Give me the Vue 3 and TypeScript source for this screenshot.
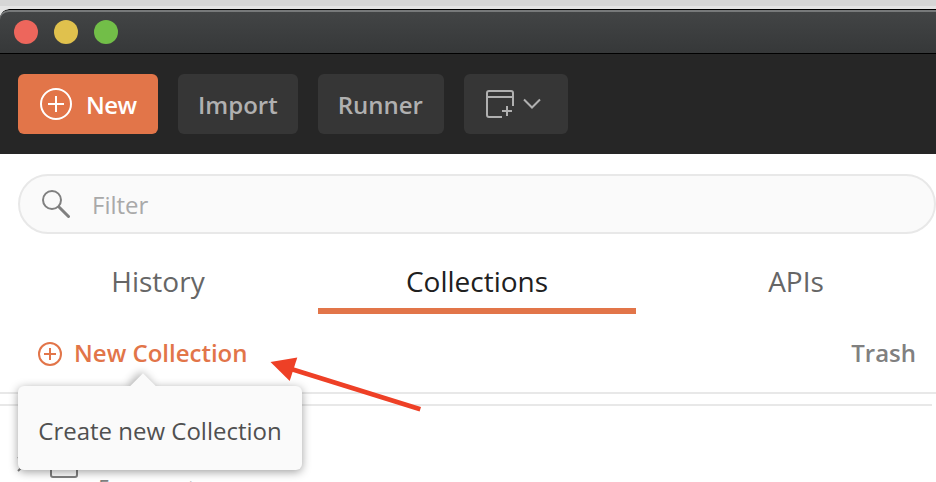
<script setup lang="ts">
import { ref } from 'vue'

interface Tab {
  id: string
  label: string
}

const tabs: Tab[] = [
  { id: 'history', label: 'History' },
  { id: 'collections', label: 'Collections' },
  { id: 'apis', label: 'APIs' },
]
const lights: string[] = ['close', 'minimize', 'maximize']
const activeTab = ref<string>('collections')
const filter = ref<string>('')
</script>

<template>
  <div class="screen">
    <div class="desktop"></div>
    <div class="window">
      <header class="titlebar">
        <span v-for="light in lights" :key="light" class="light" :class="light"></span>
      </header>

      <nav class="toolbar">
        <button class="btn primary">
          <svg width="32" height="32" viewBox="0 0 32 32" fill="none" stroke="currentColor" stroke-width="2">
            <circle cx="16" cy="16" r="15" />
            <path d="M16 8v16M8 16h16" />
          </svg>
          <span>New</span>
        </button>
        <button class="btn">Import</button>
        <button class="btn runner">Runner</button>
        <button class="btn icons" aria-label="New window">
          <svg width="28" height="28" viewBox="0 0 28 28" fill="none" stroke="currentColor" stroke-width="2">
            <path d="M16 27H3a2 2 0 0 1-2-2V3a2 2 0 0 1 2-2h22a2 2 0 0 1 2 2v13M1 7h26M21 16v10M16 21h10" />
          </svg>
          <svg width="18" height="12" viewBox="0 0 18 12" fill="none" stroke="currentColor" stroke-width="2">
            <path d="M1 1.500l8 8 8-8" />
          </svg>
        </button>
      </nav>

      <main class="sidebar">
        <label class="filter">
          <svg width="28" height="28" viewBox="0 0 28 28" fill="none" stroke="currentColor">
            <circle cx="10" cy="10" r="9" stroke-width="2" />
            <path d="M16.500 16.500l1.500 1.500" stroke-width="2" />
            <path d="M17.500 17.500l9 9" stroke-width="3" stroke-linecap="round" />
          </svg>
          <input v-model="filter" type="text" placeholder="Filter" />
        </label>

        <div class="tabs">
          <button
            v-for="tab in tabs"
            :key="tab.id"
            class="tab"
            :class="[tab.id, { active: tab.id === activeTab }]"
            @click="activeTab = tab.id"
          >
            {{ tab.label }}
          </button>
        </div>

        <div class="actions">
          <button class="new-collection">
            <svg width="24" height="24" viewBox="0 0 24 24" fill="none" stroke="currentColor" stroke-width="2">
              <circle cx="12" cy="12" r="11" />
              <path d="M12 6v12M6 12h12" />
            </svg>
            <span>New Collection</span>
          </button>
          <button class="trash">Trash</button>
          <div class="tooltip">Create new Collection</div>
        </div>

        <section class="list">
          <div class="item">
            <svg class="caret" width="10" height="16" viewBox="0 0 10 16" fill="none" stroke="currentColor" stroke-width="2">
              <path d="M1 1l7 7-7 7" />
            </svg>
            <svg class="folder" width="28" height="24" viewBox="0 0 28 24" fill="none" stroke="currentColor" stroke-width="2">
              <path d="M1 3a2 2 0 0 1 2-2h7l3 4h12a2 2 0 0 1 2 2v14a2 2 0 0 1-2 2H3a2 2 0 0 1-2-2z" />
            </svg>
            <span class="count">5 requests</span>
          </div>
        </section>
      </main>
    </div>

    <svg class="pointer" width="152" height="60" viewBox="0 0 152 60">
      <path d="M22 13.300L150.300 53.300" stroke="#ee4026" stroke-width="4.800" />
      <path d="M0.500 6L27.300 1.500L19.700 25z" fill="#ee4026" />
    </svg>
  </div>
</template>

<style>
body {
  margin: 0;
  overflow: hidden;
}
</style>

<style scoped>
.screen {
  position: relative;
  display: flex;
  flex-direction: column;
  width: 936px;
  height: 482px;
  overflow: hidden;
  background: #e4e4e4;
  font-family: "Open Sans", "Noto Sans", sans-serif;
  font-size: 24px;
}
.screen * {
  box-sizing: border-box;
}
button {
  margin: 0;
  padding: 0;
  border: 0;
  background: none;
  font: inherit;
  color: inherit;
}
.desktop {
  flex: none;
  height: 9px;
  background: linear-gradient(#d6d6d6 6px, #e4e4e4 6px);
}
.window {
  flex: 1;
  min-height: 0;
  display: flex;
  flex-direction: column;
  overflow: hidden;
  border-top-left-radius: 9px;
  background: #fff;
}
.titlebar {
  flex: none;
  display: flex;
  align-items: center;
  gap: 16px;
  height: 45px;
  padding-left: 14px;
  border-top: 1px solid #000;
  border-bottom: 1px solid #000;
  border-top-left-radius: 9px;
  background: linear-gradient(#434546, #363839);
  box-shadow: inset 0 2px 0 #77797a;
}
.light {
  width: 24px;
  height: 24px;
  border-radius: 50%;
}
.close { background: #ed665c; }
.minimize { background: #e0c14d; }
.maximize { background: #72be48; }

.toolbar {
  flex: none;
  display: flex;
  align-items: center;
  gap: 20px;
  height: 100px;
  padding-left: 18px;
  background: #262626;
}
.btn {
  display: flex;
  align-items: center;
  height: 60px;
  padding: 0 20px;
  border-radius: 6px;
  background: #363636;
  color: #b0b0b0;
  font-weight: 600;
}
.btn.primary {
  width: 140px;
  gap: 14px;
  padding-left: 22px;
  background: #e27549;
  color: #fff;
  letter-spacing: -0.6px;
}
.btn.runner {
  width: 126px;
}
.btn.icons {
  width: 104px;
  gap: 9px;
  padding: 0 0 0 22px;
}

.sidebar {
  flex: 1;
  display: flex;
  flex-direction: column;
  min-height: 0;
  padding-top: 20px;
}
.filter {
  flex: none;
  display: flex;
  align-items: center;
  gap: 22px;
  height: 60px;
  margin-left: 18px;
  padding-left: 22px;
  border: 2px solid #e8e8e8;
  border-radius: 30px;
  background: #fafafa;
  color: #808080;
}
.filter input {
  width: 700px;
  padding: 0;
  border: 0;
  outline: none;
  background: transparent;
  font: inherit;
  color: #505050;
}
.filter input::placeholder {
  color: #a9a9a9;
  opacity: 1;
}
.tabs {
  flex: none;
  display: grid;
  grid-template-columns: repeat(3, 318px);
  height: 80px;
  padding-top: 20px;
}
.tab {
  border-bottom: 6px solid transparent;
  font-size: 28px;
  color: #666;
}
.tab.history {
  padding-right: 2px;
}
.tab.apis {
  padding-left: 2px;
}
.tab.active {
  border-color: #e27549;
  color: #202020;
}
.actions {
  position: relative;
  flex: none;
  display: flex;
  align-items: center;
  justify-content: space-between;
  height: 80px;
  padding: 0 20px 0 38px;
  border-bottom: 2px solid #e8e8e8;
  font-weight: 600;
}
.new-collection {
  display: flex;
  align-items: center;
  gap: 12px;
  color: #e27549;
}
.new-collection svg {
  margin-top: 2px;
}
.new-collection span,
.trash {
  padding-bottom: 2px;
}
.trash {
  color: #808080;
}
.tooltip {
  position: absolute;
  z-index: 1;
  top: 72px;
  left: 18px;
  width: 284px;
  height: 84px;
  border-radius: 6px;
  background: #fafafa;
  box-shadow: 0 2px 10px rgba(0, 0, 0, 0.38);
  color: #505050;
  font-weight: 400;
  line-height: 90px;
  text-align: center;
  white-space: nowrap;
}
.tooltip::before {
  content: "";
  position: absolute;
  top: -9px;
  left: 116px;
  width: 18px;
  height: 18px;
  background: #fafafa;
  box-shadow: -3px 0 8px rgba(0, 0, 0, 0.28);
  clip-path: polygon(-12px -12px, 30px -12px, -12px 30px);
  transform: rotate(45deg);
}
.list {
  flex: 1;
  min-height: 0;
  margin: 10px 4px 0 0;
  padding-top: 48px;
  border-top: 2px solid #e8e8e8;
  overflow: hidden;
}
.item {
  display: flex;
  align-items: flex-start;
  padding-left: 17px;
  color: #808080;
}
.caret {
  margin-top: 2px;
}
.folder {
  margin-left: 23px;
}
.count {
  margin: 18px 0 0 20px;
  font-size: 22px;
  line-height: 30px;
}
.pointer {
  position: absolute;
  z-index: 2;
  top: 356px;
  left: 270px;
}
</style>
